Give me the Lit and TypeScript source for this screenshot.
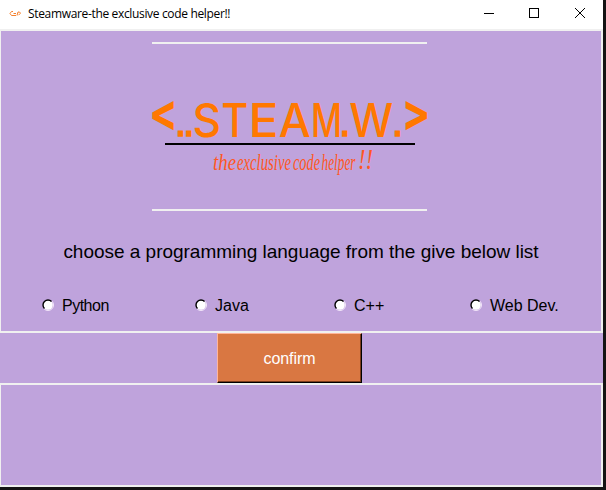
import { LitElement, html, svg, css } from "lit";
import { customElement } from "lit/decorators.js";

@customElement("title-bar")
class TitleBar extends LitElement {
  static styles = css`
    :host { display: flex; height: 29px; align-items: center; background: #fff; color: #000; }
    .mark { width: 12px; height: 8px; margin: 0 7px 1px 9px; flex: none; }
    .title { flex: 1; font: 12px/16px "Open Sans", "Noto Sans", sans-serif; letter-spacing: -0.34px; white-space: nowrap; padding-bottom: 1px; }
    .controls { width: 138px; height: 29px; flex: none; }
  `;
  render() {
    return html`
      <svg class="mark" viewBox="0 0 12 8" fill="none" stroke="#f5802c">
        <path d="M4 1.5H2.5L1 3.5L2.5 5.5H7M4.5 3.5h2.5M8 5.5L9 2h1.5l1 1.2l-2 2" />
      </svg>
      <span class="title">Steamware-the exclusive code helper!!</span>
      <svg class="controls" viewBox="0 0 138 29" fill="none" stroke="#000">
        <path d="M19 13.5h10" />
        <rect x="64.5" y="8.5" width="9" height="9" />
        <path d="M110 8l10 10M120 8l-10 10" />
      </svg>
    `;
  }
}

interface Glyph { t: string; x: number; w: number; s?: number; y?: number; b?: number; }

const WORDMARK: Glyph[] = [
  { t: "<", x: -3, w: 29, s: 52, y: 87, b: 700 },
  { t: "S", x: 40.5, w: 28.5 },
  { t: "T", x: 69.3, w: 27 },
  { t: "E", x: 96.5, w: 30 },
  { t: "A", x: 126.7, w: 32 },
  { t: "M", x: 159, w: 31 },
  { t: "W", x: 197.3, w: 44 },
  { t: ">", x: 249.5, w: 29, s: 52, y: 87, b: 700 },
];

const DOTS = [24.6, 32.7, 188.8, 241.6];

const TAGLINE: Glyph[] = [
  { t: "the", x: 61, w: 23 },
  { t: "exclusive", x: 85, w: 54 },
  { t: "code", x: 141, w: 27 },
  { t: "helper", x: 169.5, w: 34 },
];

@customElement("brand-logo")
class BrandLogo extends LitElement {
  static styles = css`
    :host { display: block; width: 275px; height: 165px; border-top: 2px solid #f0f0f0; border-bottom: 2px solid #f0f0f0; }
    .art { display: block; overflow: visible; }
    .word { font-family: Inter, sans-serif; fill: #ff7800; }
    .dots { font: bold 32px "Liberation Sans", Arial, sans-serif; fill: #ff7800; stroke: #ff7800; stroke-width: 1.4px; }
    .tag { font-family: "Liberation Serif", serif; font-style: italic; fill: #ff5722; }
  `;
  render() {
    return html`
      <svg class="art" width="275" height="165" viewBox="0 0 275 165">
        <g class="word">
          ${WORDMARK.map((g) => svg`<text x=${g.x} y=${g.y ?? 93} font-size=${g.s ?? 46} font-weight=${g.b ?? 500} textLength=${g.w} lengthAdjust="spacingAndGlyphs">${g.t}</text>`)}
        </g>
        <g class="dots">
          ${DOTS.map((x) => svg`<text x=${x} y="92.3" textLength="8" lengthAdjust="spacingAndGlyphs">.</text>`)}
        </g>
        <rect x="13" y="99" width="250" height="2" fill="#000" />
        <g class="tag">
          ${TAGLINE.map((g) => svg`<text x=${g.x} y="126" font-size="23" textLength=${g.w} lengthAdjust="spacingAndGlyphs">${g.t}</text>`)}
          <text x="206" y="125" font-size="30" textLength="15" lengthAdjust="spacingAndGlyphs">!!</text>
        </g>
      </svg>
    `;
  }
}

@customElement("radio-option")
class RadioOption extends LitElement {
  static properties = { label: { type: String } };
  declare label: string;
  static styles = css`
    :host { display: flex; align-items: center; gap: 8px; height: 20px; font: 16px/20px "Liberation Sans", Arial, sans-serif; white-space: nowrap; }
    :host([tight]) { letter-spacing: -0.5px; }
    .dot { width: 12px; height: 12px; flex: none; }
    span { position: relative; top: 1px; }
  `;
  render() {
    return html`
      <svg class="dot" viewBox="0 0 12 12" fill="none">
        <circle cx="6" cy="6" r="4.8" fill="#fff" />
        <path d="M2.1 9.9A5.5 5.5 0 0 0 9.9 2.1" stroke="#f3e6fa" />
        <path d="M2.46 9.54A5 5 0 0 1 9.54 2.46" stroke="#000" stroke-width="1.4" />
      </svg>
      <span>${this.label}</span>
    `;
  }
}

@customElement("app-root")
class AppRoot extends LitElement {
  static styles = css`
    :host { display: block; box-sizing: border-box; width: 606px; height: 490px; padding: 0 3px 3px 0; background: #141414; overflow: hidden; color: #000; }
    .window { display: flex; flex-direction: column; height: 487px; background: #bfa3dc; }
    .frame { box-sizing: border-box; border: 2px solid #f0f0f0; border-left-width: 1px; }
    .main { height: 304px; display: flex; flex-direction: column; align-items: center; padding-top: 11px; }
    .logo { align-self: flex-start; margin-left: 151px; }
    .heading { margin: 29px 0 0; font: 19px/24px "Liberation Sans", Arial, sans-serif; letter-spacing: -0.02px; white-space: nowrap; }
    .options { align-self: stretch; display: grid; grid-template-columns: 153px 139px 136px auto; padding-left: 41px; margin-top: 31px; }
    .actions { height: 50px; display: flex; padding-left: 217px; }
    .confirm { box-sizing: border-box; width: 145px; height: 50px; padding: 1px 0 0; border: 1px solid; border-color: #ffb59a #000 #000 #ffb59a; border-radius: 0; background: #d97742; box-shadow: inset -1px -1px #7c3c1b; color: #fff; font: 16px/20px "Liberation Sans", Arial, sans-serif; letter-spacing: -0.1px; }
    .output { height: 104px; }
  `;
  render() {
    return html`
      <div class="window">
        <title-bar></title-bar>
        <div class="frame main">
          <brand-logo class="logo"></brand-logo>
          <p class="heading">choose a programming language from the give below list</p>
          <div class="options">
            ${["Python", "Java", "C++", "Web Dev."].map((l) => html`<radio-option .label=${l} ?tight=${l === "Python"}></radio-option>`)}
          </div>
        </div>
        <div class="actions"><button class="confirm">confirm</button></div>
        <div class="frame output"></div>
      </div>
    `;
  }
}
